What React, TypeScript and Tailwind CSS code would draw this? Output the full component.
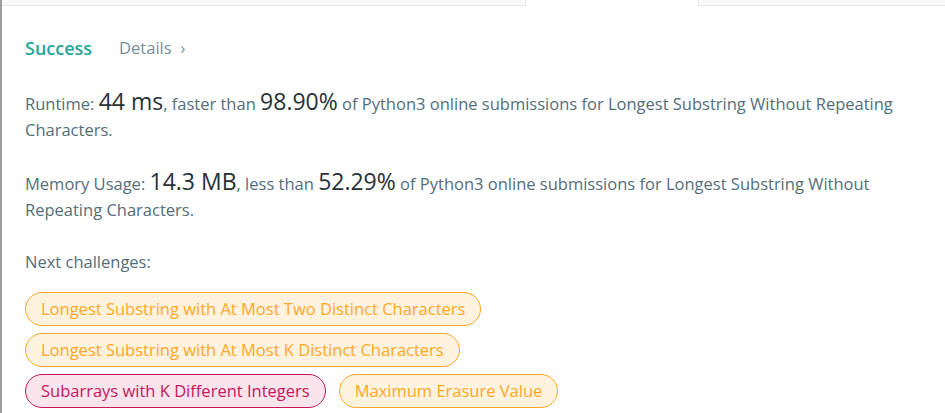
const challenges = [
  { title: "Longest Substring with At Most Two Distinct Characters", hard: false },
  { title: "Longest Substring with At Most K Distinct Characters", hard: false },
  { title: "Subarrays with K Different Integers", hard: true },
  { title: "Maximum Erasure Value", hard: false },
];

const Pill = ({ title, hard }: { title: string; hard: boolean }) => (
  <span
    className={
      hard
        ? "inline-block rounded-full border border-[#c2185b] bg-[#fce4ec] px-[15px] py-[5px] text-[#c2185b]"
        : "inline-block rounded-full border border-[#ffa726] bg-[#fff3e0] px-[15px] py-[5px] text-[#ffa726]"
    }
  >
    {title}
  </span>
);

export default function App() {
  return (
    <div className="h-[413px] w-[945px] overflow-hidden border-l-2 border-l-[#9e9e9e] bg-white font-['Open_Sans','Noto_Sans',sans-serif] text-[16.5px] text-[#546e7a]">
      <div className="flex h-[6px]">
        <div className="w-[524px] border-r border-b border-[#e8e8e8] bg-[#fafafa]" />
        <div className="w-[172px]" />
        <div className="flex-1 border-b border-l border-[#e8e8e8] bg-[#fafafa]" />
      </div>
      <div className="px-[23px] pt-[30px]">
        <div className="flex items-center gap-[27px] leading-[24px]">
          <span className="text-[18px] font-semibold text-[#26a69a]">Success</span>
          <span className="flex items-center gap-[9px] text-[#78909c]">
            Details <span className="text-[16px]">›</span>
          </span>
        </div>
        <p className="mt-[30px] pr-[15px] leading-[26px]">
          Runtime: <span className="text-[23px] leading-none text-[#263238]">44 ms</span>, faster than{" "}
          <span className="text-[23px] leading-none text-[#263238]">98.90%</span> of Python3 online submissions for Longest Substring Without Repeating Characters.
        </p>
        <p className="mt-[27px] pr-[15px] leading-[26px]">
          Memory Usage: <span className="text-[23px] leading-none text-[#263238]">14.3 MB</span>, less than{" "}
          <span className="text-[23px] leading-none text-[#263238]">52.29%</span> of Python3 online submissions for Longest Substring Without Repeating Characters.
        </p>
        <p className="mt-[26px] leading-[26px]">Next challenges:</p>
        <div className="mt-[17px] flex max-w-[600px] flex-wrap gap-x-[13px] gap-y-[7px] leading-[22px]">
          {challenges.map((c) => (
            <Pill key={c.title} title={c.title} hard={c.hard} />
          ))}
        </div>
      </div>
    </div>
  );
}
